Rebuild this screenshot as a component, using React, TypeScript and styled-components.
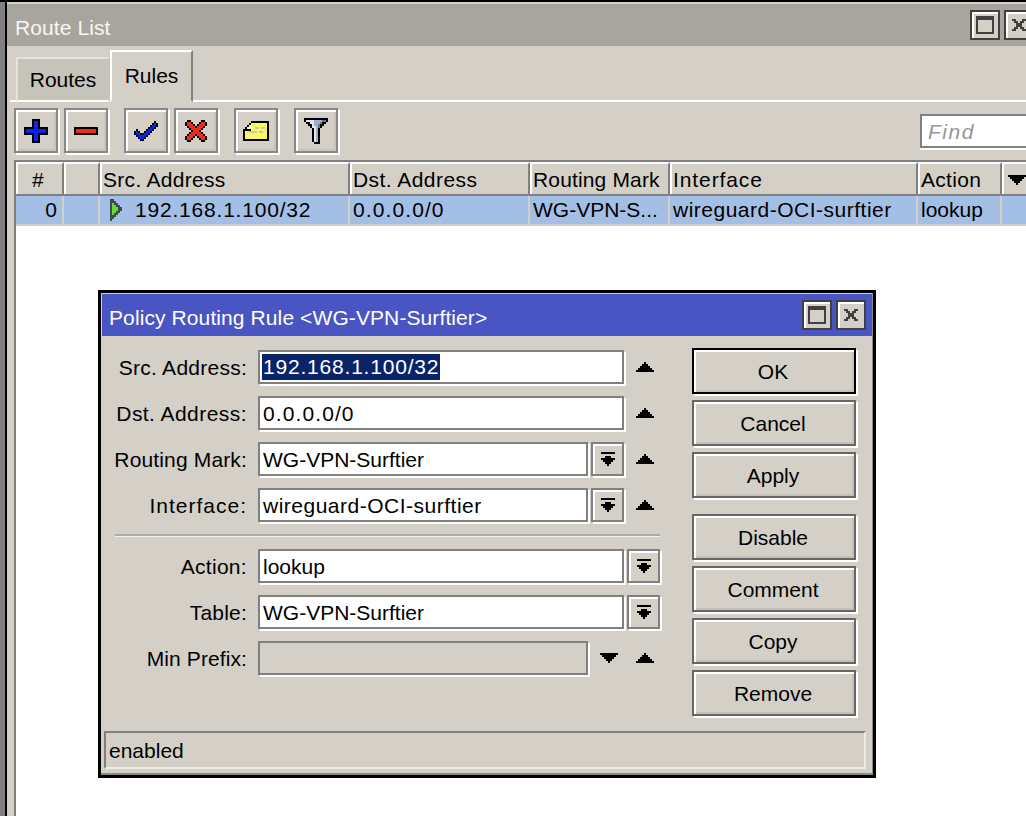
import React from 'react';
import styled, { createGlobalStyle } from 'styled-components';

const FACE = '#d4d0c8';
const EDGE = '#808080';

const GlobalStyle = createGlobalStyle`
  html, body {
    margin: 0;
    padding: 0;
    background: ${EDGE};
  }
  body {
    font-family: "Liberation Sans", Arial, sans-serif;
    font-size: 21px;
    color: #000;
  }
`;

const palette: Record<string, string> = {
  K: '#000000',
  D: '#404040',
  B: '#0a24e8',
  R: '#ee2c1c',
  Y: '#fcf860',
  W: '#f4f4e0',
  G: '#c8c8b0',
  L: '#e4e6f0',
  M: '#a4abc8',
  N: '#6c7498',
  T: '#3f4a4a',
  V: '#64d83c',
  U: '#2f9a28',
};

const icons: Record<string, string[]> = {
  plus: [
    '....KKKK....',
    '....KBBK....',
    '....KBBK....',
    '....KBBK....',
    'KKKKKBBKKKKK',
    'KBBBBBBBBBBK',
    'KBBBBBBBBBBK',
    'KKKKKBBKKKKK',
    '....KBBK....',
    '....KBBK....',
    '....KBBK....',
    '....KKKK....',
  ],
  minus: [
    'KKKKKKKKKKKK',
    'KRRRRRRRRRRK',
    'KRRRRRRRRRRK',
    'KKKKKKKKKKKK',
  ],
  check: [
    '..........K.',
    '.........KBK',
    '........KBBK',
    '.......KBBK.',
    '.K....KBBK..',
    'KBK..KBBK...',
    'KBBKKBBK....',
    '.KBBBBK.....',
    '..KBBK......',
    '...KK.......',
  ],
  cross: [
    '.KK.....KK.',
    'KRRK...KRRK',
    'KRRRK.KRRRK',
    '.KRRRKRRRK.',
    '..KRRRRRK..',
    '...KRRRK...',
    '..KRRRRRK..',
    '.KRRRKRRRK.',
    'KRRRK.KRRRK',
    'KRRK...KRRK',
    '.KK.....KK.',
  ],
  note: [
    '....KKKKKKKKK',
    '...KYYYYYYYYK',
    '..KWYYYYYYYYK',
    '.KWWYYGGYGGYK',
    'KKKKYYYYYYYYK',
    'KYYGGGGYGGYYK',
    'KYYYYYYYYYYYK',
    'KYYYYYYYYYYYK',
    'KYYYYYYYYYYYK',
    'KKKKKKKKKKKKK',
  ],
  funnel: [
    'KKKKKKKKKKKK',
    'KLLLLMMMMNNK',
    '.KKLLMMMNKK.',
    '..KKLMMNKK..',
    '...KLLMNK...',
    '....KLMK....',
    '....KLMK....',
    '....KLMK....',
    '....KLMK....',
    '....KLMK....',
    '....KLMK....',
    '....KLMK....',
    '.....KKK....',
  ],
  drop: [
    'KKKKKKK',
    '.......',
    '..KKK..',
    'KKKKKKK',
    '.KKKKK.',
    '..KKK..',
    '...K...',
  ],
  up: [
    '....K....',
    '...KKK...',
    '..KKKKK..',
    '.KKKKKKK.',
    'KKKKKKKKK',
  ],
  down: [
    'KKKKKKKKK',
    '.KKKKKKK.',
    '..KKKKK..',
    '...KKK...',
    '....K....',
  ],
  start: [
    'TT....',
    'TTT...',
    'TVTT..',
    'TVVTT.',
    'TVVVTT',
    'TVVVTT',
    'TVVTT.',
    'TVTT..',
    'TTT...',
    'TT....',
    'T.....',
  ],
  close: [
    'DD...DD',
    '.DD.DD.',
    '..DDD..',
    '..DDD..',
    '.DD.DD.',
    'DD...DD',
  ],
};

// draws a row-of-characters icon at 2 screen px per art px
const PixelIcon = ({ name }: { name: string }) => {
  const rows = icons[name];
  const w = rows[0].length;
  const h = rows.length;
  return (
    <svg width={w * 2} height={h * 2} viewBox={`0 0 ${w} ${h}`} shapeRendering="crispEdges" style={{ display: 'block', flexShrink: 0 }}>
      {rows.map((row, y) =>
        row.split('').map((c, x) =>
          c === '.' ? null : <rect key={`${x}-${y}`} x={x} y={y} width={1} height={1} fill={palette[c]} />
        )
      )}
    </svg>
  );
};

const Page = styled.div`
  width: 1026px;
  height: 816px;
  box-sizing: border-box;
  position: relative;
  overflow: hidden;
  background: ${EDGE};
  border-top: 2px solid #000;
  padding-left: 5px;
  display: flex;
`;

const Window = styled.div`
  flex: 1;
  min-width: 0;
  display: flex;
  flex-direction: column;
  background: ${FACE};
  border-left: 2px solid #000;
  padding-top: 2px;
`;

const TitleBar = styled.div`
  height: 42px;
  flex-shrink: 0;
  display: flex;
  align-items: center;
  padding-left: 8px;
  background: #a8a59f;
  color: #f6f6f2;
`;

const TitleText = styled.span`
  padding-top: 6px;
  letter-spacing: 0.1px;
`;

const TitleButtons = styled.div`
  margin-left: auto;
  margin-right: -8px;
  display: flex;
  gap: 4px;
  flex-shrink: 0;
`;

const TitleButton = styled.div`
  width: 30px;
  height: 30px;
  box-sizing: border-box;
  border: 2px solid #404040;
  background: ${FACE};
  box-shadow: inset 2px 2px 0 #fff;
  display: flex;
  align-items: center;
  justify-content: center;
`;

const MaxGlyph = styled.div`
  width: 18px;
  height: 18px;
  box-sizing: border-box;
  border: 2px solid #404040;
  border-top-width: 4px;
`;

const TabStrip = styled.div`
  height: 52px;
  flex-shrink: 0;
  margin-top: 4px;
  padding-left: 3px;
  display: flex;
  align-items: flex-end;
`;

const TabLine = styled.div<{ $grow?: boolean }>`
  width: ${(p) => (p.$grow ? 'auto' : '6px')};
  flex: ${(p) => (p.$grow ? 1 : 'none')};
  border-bottom: 2px solid #fff;
`;

const Tab = styled.div<{ $active?: boolean }>`
  box-sizing: border-box;
  display: flex;
  align-items: center;
  justify-content: center;
  height: ${(p) => (p.$active ? '52px' : '45px')};
  width: ${(p) => (p.$active ? '83px' : '94px')};
  padding-bottom: ${(p) => (p.$active ? '1px' : '0')};
  background: ${(p) => (p.$active ? FACE : '#c6c3bb')};
  border-top: 2px solid ${(p) => (p.$active ? '#fff' : '#e4e2dc')};
  border-left: 2px solid ${(p) => (p.$active ? '#fff' : '#e4e2dc')};
  border-right: 2px solid ${(p) => (p.$active ? EDGE : 'transparent')};
  border-bottom: 2px solid ${(p) => (p.$active ? FACE : '#fff')};
`;

const Toolbar = styled.div`
  height: 58px;
  flex-shrink: 0;
  box-sizing: border-box;
  padding: 6px 0 0 7px;
  display: flex;
  align-items: flex-start;
`;

const ToolButton = styled.div<{ $group?: boolean }>`
  width: 44px;
  height: 45px;
  box-sizing: border-box;
  margin-left: ${(p) => (p.$group ? '16px' : '6px')};
  &:first-child {
    margin-left: 0;
  }
  border: 2px solid #888;
  background: ${FACE};
  box-shadow: 2px 2px 0 #fff, inset 2px 2px 0 #fff, inset -2px -2px 0 #c8c4bc;
  display: flex;
  align-items: center;
  justify-content: center;
`;

const FindBox = styled.div`
  margin: 6px 0 0 auto;
  width: 106px;
  height: 34px;
  flex-shrink: 0;
  box-sizing: border-box;
  border: 2px solid ${EDGE};
  border-right: 0;
  box-shadow: 0 2px 0 #fff;
  background: #fff;
  color: #969696;
  font-style: italic;
  letter-spacing: 1.5px;
  padding-left: 6px;
  line-height: 32px;
`;

const Table = styled.div`
  flex: 1;
  margin-left: 7px;
  border-left: 2px solid ${EDGE};
  border-top: 2px solid ${EDGE};
  background: #fff;
`;

const Grid = styled.div<{ $header?: boolean }>`
  display: grid;
  grid-template-columns: 48px 36px 250px 180px 140px 248px 84px 60px;
  height: ${(p) => (p.$header ? '34px' : '30px')};
  box-sizing: border-box;
  background: ${(p) => (p.$header ? FACE : '#a3bfe5')};
  border-bottom: 2px solid ${(p) => (p.$header ? EDGE : FACE)};
`;

const HeaderCell = styled.div<{ $spacing?: number; $pad?: number }>`
  box-sizing: border-box;
  overflow: hidden;
  white-space: nowrap;
  display: flex;
  align-items: center;
  padding: 2px 0 0 ${(p) => p.$pad ?? 1}px;
  letter-spacing: ${(p) => p.$spacing ?? 0}px;
  border-top: 2px solid #fff;
  border-left: 2px solid #fff;
  border-right: 2px solid ${EDGE};
`;

const RowCell = styled.div<{ $right?: boolean; $indent?: number; $spacing?: number }>`
  box-sizing: border-box;
  overflow: hidden;
  white-space: nowrap;
  display: flex;
  align-items: center;
  justify-content: ${(p) => (p.$right ? 'flex-end' : 'flex-start')};
  padding: 0 ${(p) => (p.$right ? '5px' : '0')} 0 ${(p) => p.$indent ?? 3}px;
  letter-spacing: ${(p) => p.$spacing ?? 0}px;
  border-right: 2px solid ${FACE};
`;

const RowArrow = styled.span`
  margin: 0 13px 0 0;
`;

const Dialog = styled.div`
  position: absolute;
  left: 98px;
  top: 288px;
  width: 778px;
  height: 488px;
  box-sizing: border-box;
  border: 3px solid #000;
  padding: 1px 1px 2px 1px;
  background: ${FACE};
  box-shadow: inset -1px -2px 0 #8c8a84;
  display: flex;
  flex-direction: column;
`;

const DialogTitle = styled.div`
  height: 42px;
  flex-shrink: 0;
  padding: 0 6px 0 7px;
  background: #4a55c4;
  color: #fff;
  display: flex;
  align-items: center;
  justify-content: space-between;
`;

const DialogButtons = styled.div`
  display: flex;
  gap: 4px;
`;

const DialogBody = styled.div`
  flex: 1;
  min-height: 0;
  display: flex;
  padding-top: 12px;
`;

const Form = styled.div`
  width: 590px;
  padding: 2px 0 0 0;
`;

const Row = styled.div`
  display: flex;
  align-items: flex-start;
  height: 34px;
  margin-bottom: 12px;
`;

const Label = styled.div<{ $spacing?: number }>`
  width: 145px;
  margin-right: 11px;
  text-align: right;
  line-height: 36px;
  letter-spacing: ${(p) => p.$spacing ?? 0}px;
  white-space: nowrap;
  flex-shrink: 0;
`;

const Field = styled.div<{ $width: number; $disabled?: boolean; $spacing?: number }>`
  width: ${(p) => p.$width}px;
  height: 34px;
  box-sizing: border-box;
  flex-shrink: 0;
  border: 2px solid ${EDGE};
  box-shadow: 2px 2px 0 #fff;
  background: ${(p) => (p.$disabled ? FACE : '#fff')};
  padding-left: 3px;
  line-height: 32px;
  letter-spacing: ${(p) => p.$spacing ?? 0}px;
  white-space: nowrap;
  overflow: hidden;
`;

const Selected = styled.span`
  display: inline-block;
  margin: 2px 0 0 -1px;
  padding: 0 1px;
  line-height: 26px;
  vertical-align: top;
  background: #0a246a;
  color: #fff;
`;

const DropButton = styled.div`
  width: 33px;
  height: 34px;
  box-sizing: border-box;
  margin-left: 3px;
  flex-shrink: 0;
  border: 2px solid ${EDGE};
  box-shadow: 2px 2px 0 #fff, inset 2px 2px 0 #fff;
  background: ${FACE};
  display: flex;
  align-items: center;
  justify-content: center;
`;

const UpDown = styled.div<{ $gap: number }>`
  margin-left: ${(p) => p.$gap}px;
  padding-top: 12px;
  flex-shrink: 0;
`;

const Separator = styled.div`
  width: 545px;
  height: 3px;
  box-sizing: border-box;
  margin: 1px 0 12px 13px;
  background: #aeaba4;
  border-bottom: 1px solid #f2f0ec;
`;

const Actions = styled.div`
  display: flex;
  flex-direction: column;
`;

const ActionButton = styled.div<{ $default?: boolean; $spaced?: boolean }>`
  width: 164px;
  height: 46px;
  box-sizing: border-box;
  padding: 2px 2px 0 0;
  margin-bottom: ${(p) => (p.$spaced ? '16px' : '6px')};
  border: 2px solid ${(p) => (p.$default ? '#000' : '#666')};
  background: ${FACE};
  box-shadow: 2px 2px 0 #fff, inset 2px 2px 0 #fff, inset -2px -2px 0 #c4c0b8;
  display: flex;
  align-items: center;
  justify-content: center;
`;

const StatusBar = styled.div`
  height: 38px;
  flex-shrink: 0;
  box-sizing: border-box;
  margin: 0 6px 4px 2px;
  padding: 1px 0 0 3px;
  border: 2px solid;
  border-color: ${EDGE} #ecebe6 #ecebe6 ${EDGE};
  display: flex;
  align-items: center;
`;

const toolButtons = [
  { icon: 'plus' },
  { icon: 'minus' },
  { icon: 'check', group: true },
  { icon: 'cross' },
  { icon: 'note', group: true },
  { icon: 'funnel', group: true },
];

const actions = [
  { text: 'OK', isDefault: true },
  { text: 'Cancel' },
  { text: 'Apply', spaced: true },
  { text: 'Disable' },
  { text: 'Comment' },
  { text: 'Copy' },
  { text: 'Remove' },
];

const WindowButtons = ({ Wrap }: { Wrap: typeof DialogButtons }) => (
  <Wrap>
    <TitleButton><MaxGlyph /></TitleButton>
    <TitleButton><PixelIcon name="close" /></TitleButton>
  </Wrap>
);

const App: React.FC = () => {
  return (
    <Page>
      <GlobalStyle />
      <Window>
        <TitleBar>
          <TitleText>Route List</TitleText>
          <WindowButtons Wrap={TitleButtons} />
        </TitleBar>
        <TabStrip>
          <TabLine />
          <Tab>Routes</Tab>
          <Tab $active>Rules</Tab>
          <TabLine $grow />
        </TabStrip>
        <Toolbar>
          {toolButtons.map((b) => (
            <ToolButton key={b.icon} $group={b.group}><PixelIcon name={b.icon} /></ToolButton>
          ))}
          <FindBox>Find</FindBox>
        </Toolbar>
        <Table>
          <Grid $header>
            <HeaderCell $pad={14}>#</HeaderCell>
            <HeaderCell />
            <HeaderCell $spacing={0.3}>Src. Address</HeaderCell>
            <HeaderCell $spacing={0.45}>Dst. Address</HeaderCell>
            <HeaderCell $spacing={0.15}>Routing Mark</HeaderCell>
            <HeaderCell $spacing={0.9}>Interface</HeaderCell>
            <HeaderCell $spacing={0.3}>Action</HeaderCell>
            <HeaderCell $pad={4}><PixelIcon name="down" /></HeaderCell>
          </Grid>
          <Grid>
            <RowCell $right>0</RowCell>
            <RowCell />
            <RowCell $indent={10} $spacing={0.8}>
              <RowArrow><PixelIcon name="start" /></RowArrow>
              192.168.1.100/32
            </RowCell>
            <RowCell $spacing={1.1}>0.0.0.0/0</RowCell>
            <RowCell>WG-VPN-S...</RowCell>
            <RowCell $spacing={0.5}>wireguard-OCI-surftier</RowCell>
            <RowCell>lookup</RowCell>
            <RowCell />
          </Grid>
        </Table>
      </Window>

      <Dialog>
        <DialogTitle>
          <TitleText>{'Policy Routing Rule <WG-VPN-Surftier>'}</TitleText>
          <WindowButtons Wrap={DialogButtons} />
        </DialogTitle>
        <DialogBody>
          <Form>
            <Row>
              <Label $spacing={0.25}>Src. Address:</Label>
              <Field $width={366} $spacing={0.8}><Selected>192.168.1.100/32</Selected></Field>
              <UpDown $gap={12}><PixelIcon name="up" /></UpDown>
            </Row>
            <Row>
              <Label $spacing={0.45}>Dst. Address:</Label>
              <Field $width={366} $spacing={1.1}>0.0.0.0/0</Field>
              <UpDown $gap={12}><PixelIcon name="up" /></UpDown>
            </Row>
            <Row>
              <Label $spacing={0.15}>Routing Mark:</Label>
              <Field $width={330}>WG-VPN-Surftier</Field>
              <DropButton><PixelIcon name="drop" /></DropButton>
              <UpDown $gap={12}><PixelIcon name="up" /></UpDown>
            </Row>
            <Row>
              <Label $spacing={1}>Interface:</Label>
              <Field $width={330} $spacing={0.5}>wireguard-OCI-surftier</Field>
              <DropButton><PixelIcon name="drop" /></DropButton>
              <UpDown $gap={12}><PixelIcon name="up" /></UpDown>
            </Row>
            <Separator />
            <Row>
              <Label $spacing={0.3}>Action:</Label>
              <Field $width={366}>lookup</Field>
              <DropButton><PixelIcon name="drop" /></DropButton>
            </Row>
            <Row>
              <Label $spacing={0.2}>Table:</Label>
              <Field $width={366}>WG-VPN-Surftier</Field>
              <DropButton><PixelIcon name="drop" /></DropButton>
            </Row>
            <Row>
              <Label $spacing={0.1}>Min Prefix:</Label>
              <Field $width={330} $disabled />
              <UpDown $gap={12}><PixelIcon name="down" /></UpDown>
              <UpDown $gap={18}><PixelIcon name="up" /></UpDown>
            </Row>
          </Form>
          <Actions>
            {actions.map((a) => (
              <ActionButton key={a.text} $default={a.isDefault} $spaced={a.spaced}>{a.text}</ActionButton>
            ))}
          </Actions>
        </DialogBody>
        <StatusBar>enabled</StatusBar>
      </Dialog>
    </Page>
  );
};

export default App;
